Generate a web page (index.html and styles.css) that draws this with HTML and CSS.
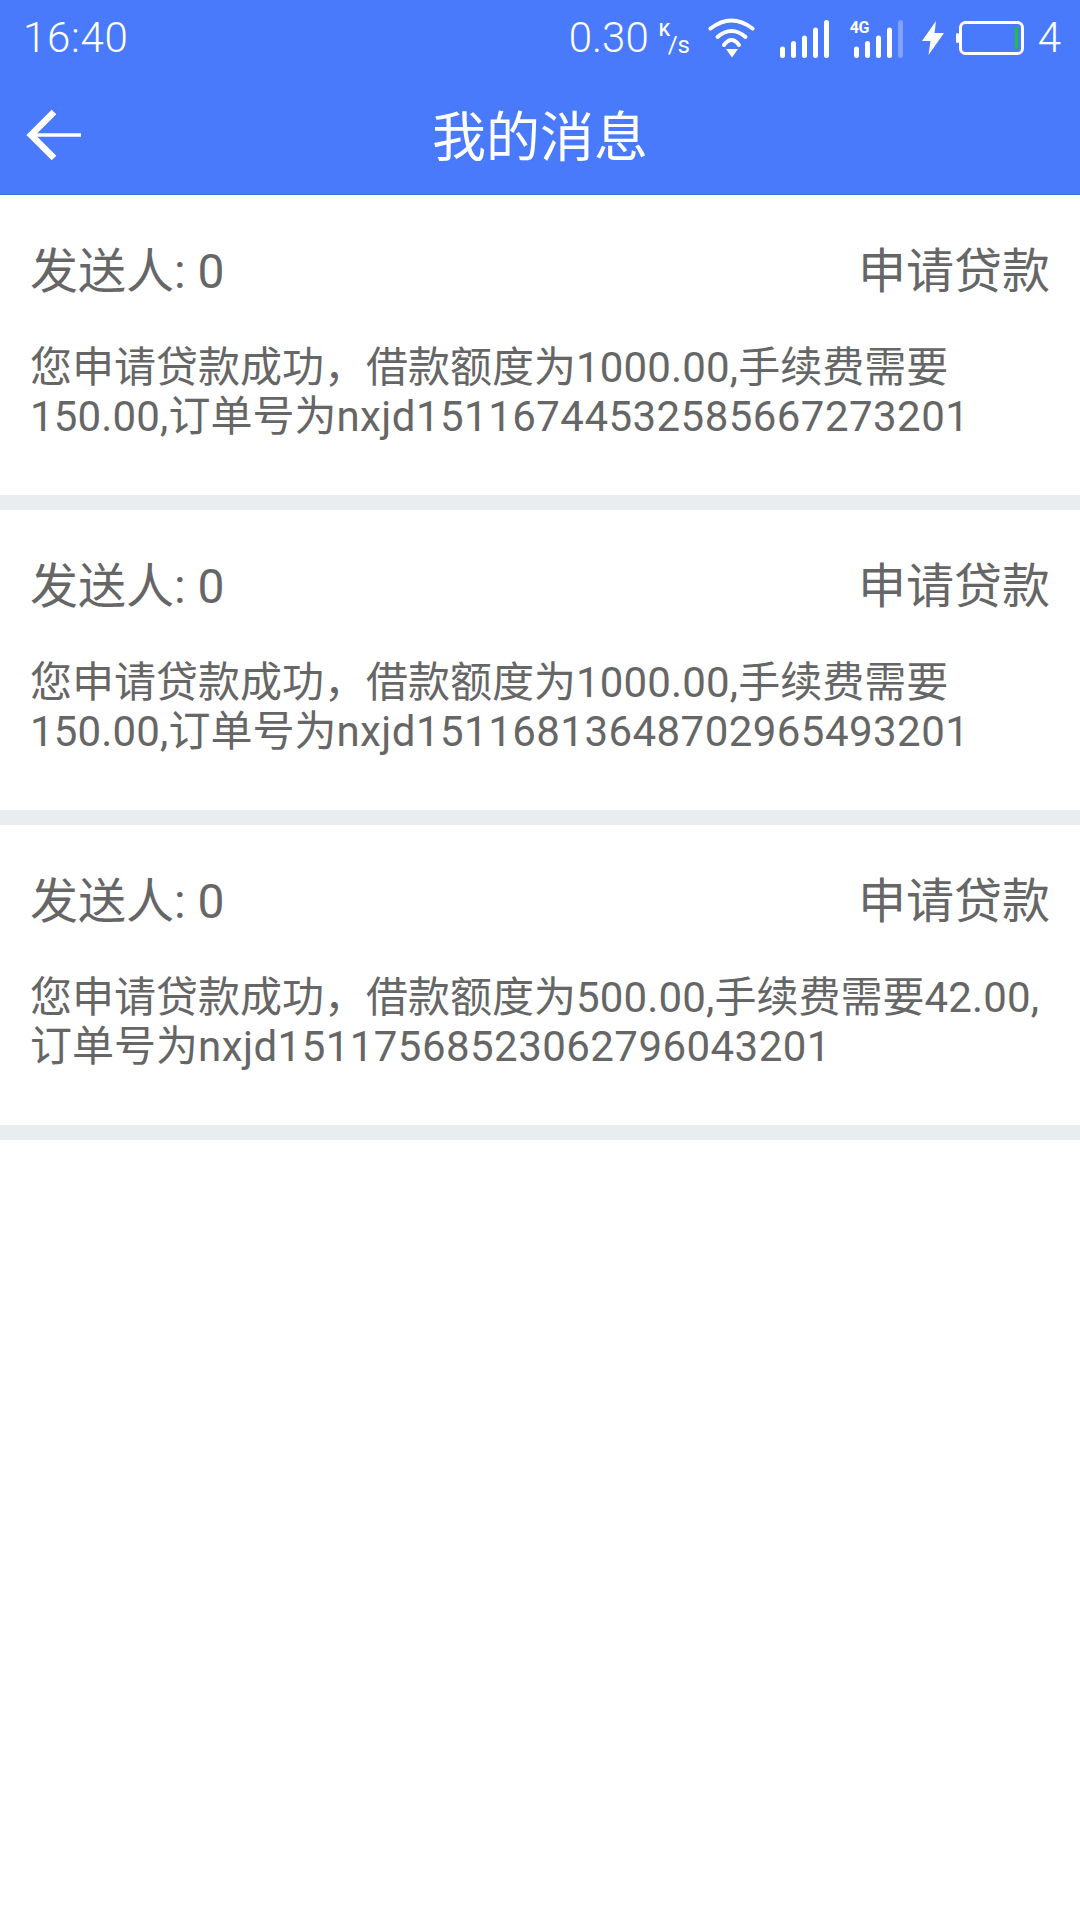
FILE: index.html
```html
<!DOCTYPE html>
<html lang="zh-CN">
<head>
<meta charset="utf-8">
<title>我的消息</title>
<link rel="stylesheet" href="styles.css">
</head>
<body>
<header class="top">
  <div class="status">
    <span class="time">16:40</span>
    <div class="status-right">
      <span class="speed">0.30</span>
      <span class="unit"><span class="unit-k">K</span><span class="unit-s">/s</span></span>
      <svg class="ic-wifi" width="47" height="41" viewBox="0 0 47 41"><g fill="none" stroke="#fff" stroke-width="4" stroke-linecap="round"><path d="M2.500 10.500Q23.500 -5.500 44.500 10.500"/><path d="M9.500 19Q23.500 7 37.500 19"/><path d="M16 27Q23.500 17 31 27"/></g><path d="M18 31H30L24 39.500Z" fill="#fff"/></svg>
      <svg class="ic-sig1" width="49" height="38" viewBox="0 0 49 38"><g fill="#fff"><rect x="0" y="26.500" width="5" height="11.500" rx="2.500"/><rect x="11" y="21" width="5" height="17" rx="2.500"/><rect x="22" y="15.500" width="5" height="22.500" rx="2.500"/><rect x="33" y="7.500" width="5" height="30.500" rx="2.500"/><rect x="44" y="0" width="5" height="38" rx="2.500"/></g></svg>
      <div class="sig2">
        <span class="lte">4G</span>
        <svg width="49" height="38" viewBox="0 0 49 38"><g fill="#fff"><rect x="0" y="26.500" width="5" height="11.500" rx="2.500"/><rect x="11" y="21" width="5" height="17" rx="2.500"/><rect x="22" y="15.500" width="5" height="22.500" rx="2.500"/><rect x="33" y="7.500" width="5" height="30.500" rx="2.500"/><rect x="44" y="0" width="5" height="38" rx="2.500" opacity=".3"/></g></svg>
      </div>
      <svg class="ic-bolt" width="22" height="34" viewBox="0 0 22 34"><path d="M14 0L0 20H8.500L6.500 34L22 12H12.500Z" fill="#fff"/></svg>
      <svg class="ic-batt" width="68" height="34" viewBox="0 0 68 34"><rect x="4.500" y="1.500" width="62" height="31" rx="5" fill="none" stroke="#fff" stroke-width="3"/><rect x="0" y="12" width="3" height="10" rx="1.500" fill="#fff"/><rect x="59" y="6" width="3" height="22" fill="#1fbf3a"/></svg>
      <span class="level">4</span>
    </div>
  </div>
  <div class="bar">
    <svg class="back" width="56" height="56" viewBox="0 0 56 56"><path d="M28 5L5 28L28 51" fill="none" stroke="#fff" stroke-width="6.500"/><path d="M8 28H55" fill="none" stroke="#fff" stroke-width="3.500"/></svg>
    <h1 class="title">我的消息</h1>
  </div>
</header>
<main>
  <article class="msg">
    <div class="msg-head"><span>发送人: 0</span><span>申请贷款</span></div>
    <p class="msg-body">您申请贷款成功，借款额度为<span class="amount">1000.00,</span>手续费需要<span class="amount">150.00,</span>订单号为<span class="order">nxjd15116744532585667273201</span></p>
  </article>
  <article class="msg">
    <div class="msg-head"><span>发送人: 0</span><span>申请贷款</span></div>
    <p class="msg-body">您申请贷款成功，借款额度为<span class="amount">1000.00,</span>手续费需要<span class="amount">150.00,</span>订单号为<span class="order">nxjd15116813648702965493201</span></p>
  </article>
  <article class="msg">
    <div class="msg-head"><span>发送人: 0</span><span>申请贷款</span></div>
    <p class="msg-body">您申请贷款成功，借款额度为<span class="amount">500.00,</span>手续费需要<span class="amount">42.00,</span>订单号为<span class="order">nxjd15117568523062796043201</span></p>
  </article>
</main>
</body>
</html>
```
FILE: styles.css
```css
* { box-sizing: border-box; }
html, body { margin: 0; padding: 0; }
body {
  width: 1080px;
  height: 1920px;
  background: #fff;
  font-family: Roboto, "Noto Sans CJK SC", sans-serif;
  overflow: hidden;
}
.top {
  height: 195px;
  background: #4a7afc;
  border-bottom: 1px solid #3f70d8;
  color: #fff;
}
.status {
  height: 76px;
  padding: 0 19px 0 23px;
  display: flex;
  align-items: center;
  justify-content: space-between;
}
.time { font-size: 42px; font-weight: 300; letter-spacing: .7px; margin-bottom: 2px; }
.status-right { display: flex; align-items: center; }
.speed { font-size: 42px; font-weight: 300; margin-bottom: 2px; }
.unit { position: relative; width: 30px; height: 34px; margin-left: 10px; }
.unit-k { position: absolute; left: 0; top: 0; font-size: 18px; line-height: 18px; font-weight: 500; }
.unit-s { position: absolute; left: 9px; top: 12px; font-size: 24px; line-height: 24px; }
.ic-wifi { margin-left: 19px; }
.ic-sig1 { margin-left: 25px; margin-top: 1px; }
.sig2 { position: relative; margin-left: 25px; margin-top: 1px; height: 38px; }
.sig2 svg { display: block; }
.lte { position: absolute; left: -4px; top: 0; font-size: 16px; font-weight: 700; line-height: 16px; letter-spacing: -0.3px; background: #4a7afc; padding-right: 1px; }
.ic-bolt { margin-left: 19px; }
.ic-batt { margin-left: 12px; }
.level { font-size: 42px; font-weight: 300; margin-left: 14px; margin-bottom: 2px; }
.bar {
  height: 118px;
  position: relative;
  display: flex;
  align-items: center;
  justify-content: center;
}
.back { position: absolute; left: 26px; top: 31px; }
.title { margin: 0 0 4px; font-size: 54px; font-weight: 400; font-family: "Noto Sans CJK SC", sans-serif; }
.msg {
  height: 315px;
  border-bottom: 15px solid #e9edf0;
  padding: 46px 30px 0 30px;
  color: #666;
}
.msg-head {
  display: flex;
  justify-content: space-between;
  font-size: 48px;
  line-height: 62px;
}
.msg-body {
  margin: 40px 0 0;
  font-size: 42px;
  line-height: 49px;
}
.amount { letter-spacing: .15px; }
.order { letter-spacing: .45px; }
```
